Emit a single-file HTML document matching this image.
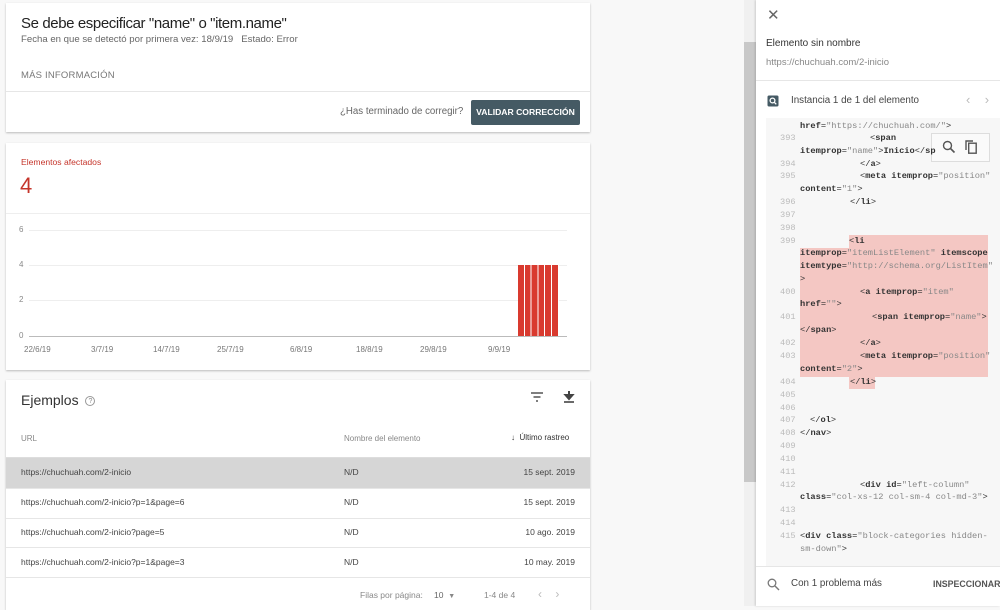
<!DOCTYPE html>
<html><head><meta charset="utf-8"><style>
*{margin:0;padding:0;box-sizing:border-box}
body{width:1000px;height:606px;overflow:hidden;background:#f8f8f8;font-family:"Liberation Sans",sans-serif;position:relative;color:#333}
.a{position:absolute;white-space:nowrap}
.card{position:absolute;background:#fff;box-shadow:0 1px 2px rgba(0,0,0,.25)}
.code{position:absolute;font-family:"Liberation Mono",monospace;font-size:8.7px;line-height:12px;white-space:pre;color:#333}
.ln{position:absolute;left:780px;font-family:"Liberation Mono",monospace;font-size:8.7px;color:#bbb;line-height:12px}
.s{color:#888}
b{font-weight:bold}
</style></head><body>
<div class="card" style="left:6px;top:3px;width:584px;height:129px">
<div class="a" style="left:15px;top:12px;font-size:15px;letter-spacing:-0.4px;color:#222">Se debe especificar "name" o "item.name"</div>
<div class="a" style="left:15px;top:31px;font-size:9.6px;color:#666">Fecha en que se detectó por primera vez: 18/9/19 &nbsp; Estado: Error</div>
<div class="a" style="left:15px;top:67px;font-size:9.5px;color:#777;letter-spacing:.2px">MÁS INFORMACIÓN</div>
<div class="a" style="left:0;top:88px;width:584px;height:1px;background:#e6e6e6"></div>
<div class="a" style="left:334px;top:103px;font-size:9.7px;color:#666">¿Has terminado de corregir?</div>
<div class="a" style="left:465px;top:97px;width:109px;height:25px;background:#455a64;border-radius:2px;color:#fff;font-size:8.6px;font-weight:bold;text-align:center;line-height:25px">VALIDAR CORRECCIÓN</div>
</div>
<div class="card" style="left:6px;top:143px;width:584px;height:227px">
<div class="a" style="left:15px;top:14px;font-size:8.6px;color:#c5352b">Elementos afectados</div>
<div class="a" style="left:14px;top:30px;font-size:22px;color:#c5352b">4</div>
<div class="a" style="left:0;top:70px;width:584px;height:1px;background:#eee"></div>
</div>
<div class="a" style="left:19px;top:225px;font-size:8px;color:#888">6</div>
<div class="a" style="left:19px;top:260px;font-size:8px;color:#888">4</div>
<div class="a" style="left:19px;top:295px;font-size:8px;color:#888">2</div>
<div class="a" style="left:19px;top:331px;font-size:8px;color:#888">0</div>
<div class="a" style="left:29px;top:230px;width:538px;height:1px;background:#eee"></div>
<div class="a" style="left:29px;top:265px;width:538px;height:1px;background:#eee"></div>
<div class="a" style="left:29px;top:300px;width:538px;height:1px;background:#eee"></div>
<div class="a" style="left:29px;top:336px;width:538px;height:1px;background:#bbb"></div>
<div class="a" style="left:518px;top:265px;width:41px;height:71px;background:repeating-linear-gradient(90deg,#d93a2f 0 5.8px,#fff 5.8px 6.8px)"></div>
<div class="a" style="top:345px;left:24px;font-size:8px;color:#777">22/6/19</div>
<div class="a" style="top:345px;left:91px;font-size:8px;color:#777">3/7/19</div>
<div class="a" style="top:345px;left:153px;font-size:8px;color:#777">14/7/19</div>
<div class="a" style="top:345px;left:217px;font-size:8px;color:#777">25/7/19</div>
<div class="a" style="top:345px;left:290px;font-size:8px;color:#777">6/8/19</div>
<div class="a" style="top:345px;left:356px;font-size:8px;color:#777">18/8/19</div>
<div class="a" style="top:345px;left:420px;font-size:8px;color:#777">29/8/19</div>
<div class="a" style="top:345px;left:488px;font-size:8px;color:#777">9/9/19</div>
<div class="card" style="left:6px;top:380px;width:584px;height:230px">
<div class="a" style="left:15px;top:12px;font-size:14px;color:#333">Ejemplos <span style="color:#888;border:1px solid #999;border-radius:50%;display:inline-block;width:10px;height:10px;line-height:9px;text-align:center;font-size:7px;vertical-align:2px;margin-left:3px">?</span></div>
<svg class="a" style="left:524px;top:11px" width="14" height="12"><path d="M1 2h12M3.5 6h7M6 10h2" stroke="#555" stroke-width="1.5"/></svg>
<svg class="a" style="left:556px;top:10px" width="14" height="14"><path d="M7 1v6M3.5 5l3.5 4 3.5-4z" stroke="#444" stroke-width="2" fill="#444"/><path d="M2 12h10" stroke="#444" stroke-width="1.6"/></svg>
<div class="a" style="left:15px;top:54px;font-size:8px;color:#888">URL</div>
<div class="a" style="left:338px;top:54px;font-size:8px;color:#888">Nombre del elemento</div>
<div class="a" style="left:505px;top:53px;font-size:8px;color:#333">&#8595;&nbsp; Último rastreo</div>
<div class="a" style="left:0;top:77px;width:584px;height:1px;background:#ddd"></div>
<div class="a" style="left:0;top:78px;width:584px;height:30px;background:#d6d6d6"></div>
<div class="a" style="left:0;top:108px;width:584px;height:1px;background:#e6e6e6"></div>
<div class="a" style="left:0;top:138px;width:584px;height:1px;background:#e6e6e6"></div>
<div class="a" style="left:0;top:167px;width:584px;height:1px;background:#e6e6e6"></div>
<div class="a" style="left:0;top:197px;width:584px;height:1px;background:#e6e6e6"></div>
<div class="a" style="left:15px;top:87px;font-size:8.5px;color:#444">https://chuchuah.com/2-inicio</div>
<div class="a" style="left:15px;top:117px;font-size:8.5px;color:#444">https://chuchuah.com/2-inicio?p=1&amp;page=6</div>
<div class="a" style="left:15px;top:147px;font-size:8.5px;color:#444">https://chuchuah.com/2-inicio?page=5</div>
<div class="a" style="left:15px;top:177px;font-size:8.5px;color:#444">https://chuchuah.com/2-inicio?p=1&amp;page=3</div>
<div class="a" style="left:338px;top:87px;font-size:8.5px;color:#444">N/D</div>
<div class="a" style="left:338px;top:117px;font-size:8.5px;color:#444">N/D</div>
<div class="a" style="left:338px;top:147px;font-size:8.5px;color:#444">N/D</div>
<div class="a" style="left:338px;top:177px;font-size:8.5px;color:#444">N/D</div>
<div class="a" style="right:15px;top:87px;font-size:8.5px;color:#444">15 sept. 2019</div>
<div class="a" style="right:15px;top:117px;font-size:8.5px;color:#444">15 sept. 2019</div>
<div class="a" style="right:15px;top:147px;font-size:8.5px;color:#444">10 ago. 2019</div>
<div class="a" style="right:15px;top:177px;font-size:8.5px;color:#444">10 may. 2019</div>
<div class="a" style="left:354px;top:210px;font-size:8.5px;color:#888">Filas por página:</div>
<div class="a" style="left:428px;top:210px;font-size:8.5px;color:#666">10 &nbsp;<span style="font-size:7px;color:#888">&#9660;</span></div>
<div class="a" style="left:478px;top:210px;font-size:8.5px;color:#888">1-4 de 4</div>
<div class="a" style="left:532px;top:207px;font-size:12px;color:#bbb">&#8249; &nbsp; &nbsp;&#8250;</div>
</div>
<div class="a" style="left:744px;top:0;width:12px;height:606px;background:#f0f0f0"></div>
<div class="a" style="left:744px;top:42px;width:12px;height:440px;background:#c8c8c8"></div>
<div class="a" style="left:756px;top:0;width:244px;height:606px;background:#fff;box-shadow:-1px 0 2px rgba(0,0,0,.15)"></div>
<div class="a" style="left:767px;top:6px;font-size:15px;color:#666">&#10005;</div>
<div class="a" style="left:766px;top:38px;font-size:10px;color:#333">Elemento sin nombre</div>
<div class="a" style="left:766px;top:57px;font-size:9.5px;color:#888">https://chuchuah.com/2-inicio</div>
<div class="a" style="left:756px;top:80px;width:244px;height:1px;background:#e6e6e6"></div>
<svg class="a" style="left:767px;top:95px" width="12" height="12"><rect x="0.5" y="0.5" width="11" height="11" rx="1.5" fill="#455a64"/><circle cx="5.5" cy="5.5" r="2.4" stroke="#fff" stroke-width="1.3" fill="none"/><path d="M7.3 7.3l2 2" stroke="#fff" stroke-width="1.3"/></svg>
<div class="a" style="left:791px;top:95px;font-size:9.8px;color:#444">Instancia 1 de 1 del elemento</div>
<div class="a" style="left:966px;top:92px;font-size:13px;color:#bbb">&#8249; &nbsp; &nbsp;&#8250;</div>
<div class="a" style="left:766px;top:118px;width:234px;height:448px;background:#f7f7f7"></div>
<div class="a" style="left:849px;top:235px;width:139px;height:13px;background:#f4c7c3"></div>
<div class="a" style="left:800px;top:248px;width:188px;height:129px;background:#f4c7c3"></div>
<div class="a" style="left:849px;top:377px;width:26px;height:12px;background:#f4c7c3"></div>
<div class="a" style="left:931px;top:133px;width:59px;height:29px;background:#fafafa;border:1px solid #ddd"></div>
<svg class="a" style="left:942px;top:140px" width="14" height="14"><circle cx="5.5" cy="5.5" r="4" stroke="#555" stroke-width="1.4" fill="none"/><path d="M8.5 8.5l4 4" stroke="#555" stroke-width="1.6"/></svg>
<svg class="a" style="left:964px;top:139px" width="14" height="16"><path d="M2 11V2h7" stroke="#555" stroke-width="1.4" fill="none"/><rect x="4.7" y="4.2" width="7.5" height="10" stroke="#555" stroke-width="1.4" fill="none"/></svg>
<div class="code" style="left:800px;top:120px"><b>href</b>=<span class="s">"https://chuchuah.com/"</span>&gt;</div>
<div class="ln" style="top:132px">393</div><div class="code" style="left:870px;top:132px">&lt;<b>span</b></div>
<div class="code" style="left:800px;top:145px"><b>itemprop</b>=<span class="s">"name"</span>&gt;<b>Inicio</b>&lt;/<b>sp</b></div>
<div class="ln" style="top:158px">394</div><div class="code" style="left:860px;top:158px">&lt;/<b>a</b>&gt;</div>
<div class="ln" style="top:170px">395</div><div class="code" style="left:860px;top:170px">&lt;<b>meta itemprop</b>=<span class="s">"position"</span></div>
<div class="code" style="left:800px;top:183px"><b>content</b>=<span class="s">"1"</span>&gt;</div>
<div class="ln" style="top:196px">396</div><div class="code" style="left:850px;top:196px">&lt;/<b>li</b>&gt;</div>
<div class="ln" style="top:209px">397</div>
<div class="ln" style="top:222px">398</div>
<div class="ln" style="top:235px">399</div><div class="code" style="left:849px;top:235px">&lt;<b>li</b></div>
<div class="code" style="left:800px;top:247px"><b>itemprop</b>=<span class="s">"itemListElement"</span> <b>itemscope</b></div>
<div class="code" style="left:800px;top:260px"><b>itemtype</b>=<span class="s">"http://schema.org/ListItem"</span></div>
<div class="code" style="left:800px;top:273px">&gt;</div>
<div class="ln" style="top:286px">400</div><div class="code" style="left:860px;top:286px">&lt;<b>a itemprop</b>=<span class="s">"item"</span></div>
<div class="code" style="left:800px;top:298px"><b>href</b>=<span class="s">""</span>&gt;</div>
<div class="ln" style="top:311px">401</div><div class="code" style="left:872px;top:311px">&lt;<b>span itemprop</b>=<span class="s">"name"</span>&gt;</div>
<div class="code" style="left:800px;top:324px">&lt;/<b>span</b>&gt;</div>
<div class="ln" style="top:337px">402</div><div class="code" style="left:860px;top:337px">&lt;/<b>a</b>&gt;</div>
<div class="ln" style="top:350px">403</div><div class="code" style="left:860px;top:350px">&lt;<b>meta itemprop</b>=<span class="s">"position"</span></div>
<div class="code" style="left:800px;top:363px"><b>content</b>=<span class="s">"2"</span>&gt;</div>
<div class="ln" style="top:376px">404</div><div class="code" style="left:850px;top:376px">&lt;/<b>li</b>&gt;</div>
<div class="ln" style="top:389px">405</div>
<div class="ln" style="top:402px">406</div>
<div class="ln" style="top:414px">407</div><div class="code" style="left:810px;top:414px">&lt;/<b>ol</b>&gt;</div>
<div class="ln" style="top:427px">408</div><div class="code" style="left:800px;top:427px">&lt;/<b>nav</b>&gt;</div>
<div class="ln" style="top:440px">409</div>
<div class="ln" style="top:453px">410</div>
<div class="ln" style="top:466px">411</div>
<div class="ln" style="top:479px">412</div><div class="code" style="left:860px;top:479px">&lt;<b>div id</b>=<span class="s">"left-column"</span></div>
<div class="code" style="left:800px;top:491px"><b>class</b>=<span class="s">"col-xs-12 col-sm-4 col-md-3"</span>&gt;</div>
<div class="ln" style="top:504px">413</div>
<div class="ln" style="top:517px">414</div>
<div class="ln" style="top:530px">415</div><div class="code" style="left:800px;top:530px">&lt;<b>div class</b>=<span class="s">"block-categories hidden-</span></div>
<div class="code" style="left:800px;top:543px;height:10px;overflow:hidden"><span class="s">sm-down"</span>&gt;</div>
<div class="a" style="left:756px;top:566px;width:244px;height:1px;background:#e6e6e6"></div>
<svg class="a" style="left:767px;top:578px" width="13" height="13"><circle cx="5" cy="5" r="3.8" stroke="#777" stroke-width="1.3" fill="none"/><path d="M8 8l4 4" stroke="#777" stroke-width="1.4"/></svg>
<div class="a" style="left:791px;top:578px;font-size:9.8px;color:#444">Con 1 problema más</div>
<div class="a" style="left:933px;top:579px;font-size:8.8px;color:#555;font-weight:bold">INSPECCIONAR</div>
</body></html>
